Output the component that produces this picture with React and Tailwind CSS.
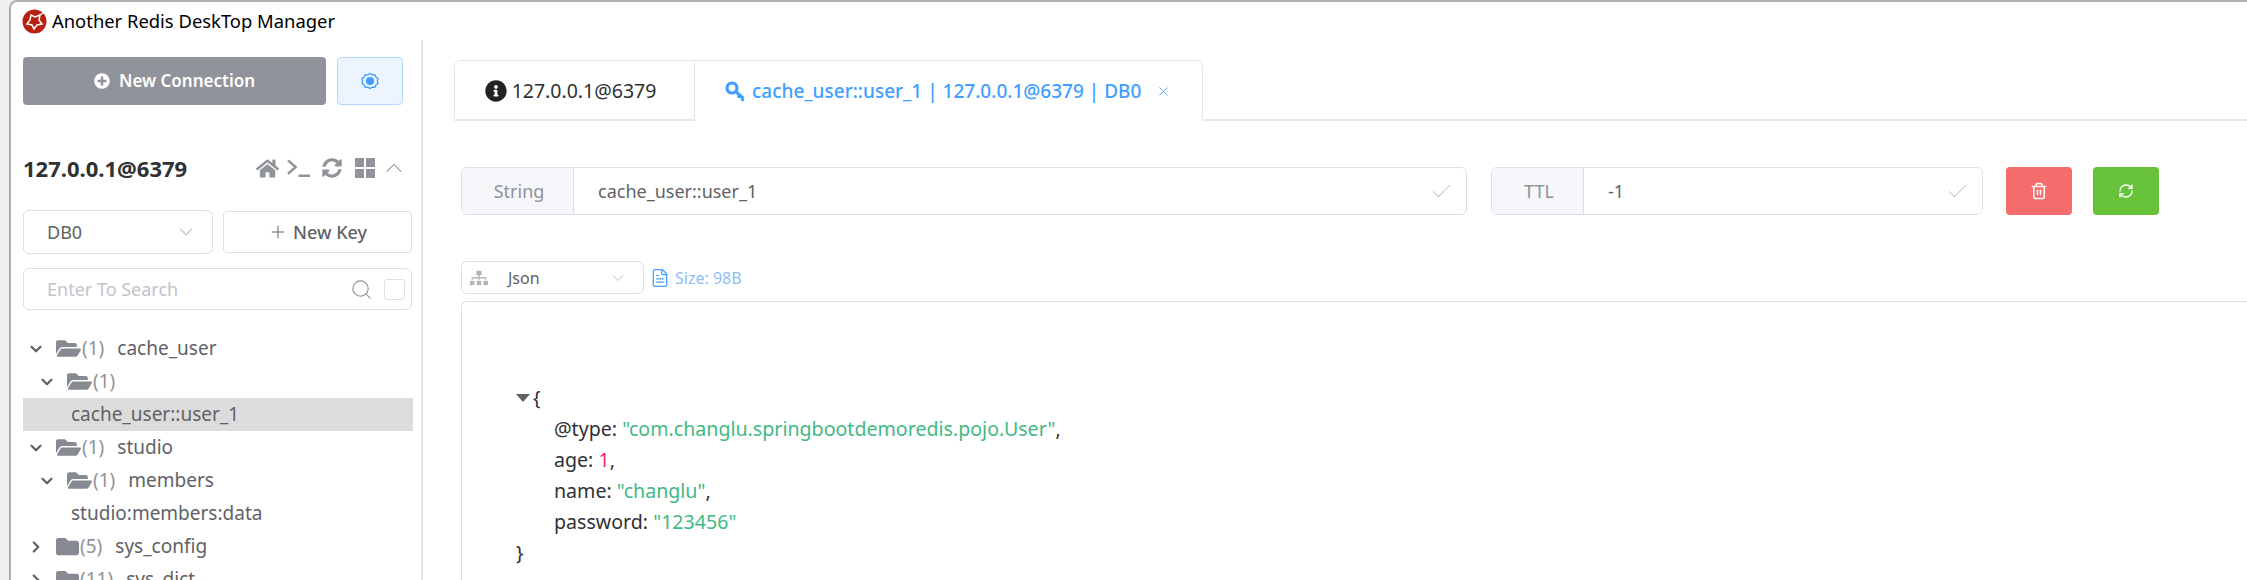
import React from 'react';
import { ChevronDown, ChevronUp, ChevronRight, Plus, Search, Check, Trash2, RefreshCw, X, FileText } from 'lucide-react';
import { FaHome, FaInfoCircle, FaSitemap, FaFolder, FaFolderOpen, FaSyncAlt, FaPlusCircle } from 'react-icons/fa';

const font = 'font-["Noto_Sans","Open_Sans",sans-serif]';

const TreeRow = ({ indent, open, count, name }) => (
  <div className={`flex items-center h-[33px] text-[19px] text-[#606266] ${indent}`}>
    <span className="w-[26px] flex justify-center text-[#606266]">
      {open ? <ChevronDown size={18} strokeWidth={3} /> : <ChevronRight size={18} strokeWidth={3} />}
    </span>
    {open ? <FaFolderOpen size={25} className="ml-[7px] text-[#878a90]" /> : <FaFolder size={23} className="ml-[7px] text-[#878a90]" />}
    <span className="ml-[1px] text-[#909399]">({count})</span>
    {name && <span className="ml-[13px]">{name}</span>}
  </div>
);

const KeyRow = ({ name, active }) => (
  <div className={`flex items-center h-[33px] pl-[48px] text-[19px] text-[#606266] ${active ? 'bg-[#dcdcdc]' : ''}`}>{name}</div>
);

const Field = ({ label, value, labelW, className }) => (
  <div className={`flex h-[48px] border border-[#dcdfe6] rounded-[6px] overflow-hidden ${className}`}>
    <div className={`${labelW} shrink-0 bg-[#f5f7fa] border-r border-[#dcdfe6] flex items-center justify-center pl-[3px] text-[18px] text-[#909399]`}>{label}</div>
    <div className="flex-1 flex items-center pl-[24px] text-[18px] text-[#606266]">{value}</div>
    <div className="w-[37px] flex items-center text-[#c0c4cc]"><Check size={25} strokeWidth={1} /></div>
  </div>
);

export default function App() {
  return (
    <div className={`w-[2247px] h-[580px] overflow-hidden bg-[#f0f0f0] pl-[9px] ${font}`}>
      <div className="h-[580px] bg-white border-l-[2px] border-t-[2px] border-[#b0b0b0] rounded-tl-[8px] overflow-hidden">
        <div className="h-[38px] flex items-center pl-[11px] text-[18.4px] text-black">
          <svg width="25" height="25" viewBox="0 0 25 25" className="mr-[5px]">
            <circle cx="12.5" cy="12.5" r="12" fill="#b8200f" />
            <path d="M9 6l4 2 5-2-1 5 3 4-5 1-3 4-2-4-5-1 3-4z" fill="none" stroke="#fff" strokeWidth="1.5" />
            <path d="M18 6l3-2" stroke="#fff" strokeWidth="1.5" />
          </svg>
          Another Redis DeskTop Manager
        </div>
        <div className="flex">
          <aside className="w-[412px] h-[540px] border-r-2 border-[#e4e7ed] pl-[12px] pt-[17px] shrink-0">
            <div className="w-[389px] flex justify-between">
              <button className="w-[303px] h-[48px] rounded-[4px] bg-[#909399] text-white text-[17px] font-semibold flex items-center justify-center gap-[9px]">
                <FaPlusCircle size={16} />New Connection
              </button>
              <button className="w-[66px] h-[48px] mr-[9px] rounded-[4px] bg-[#ecf5ff] border border-[#b3d8ff] text-[#409eff] flex items-center justify-center">
                <svg width="18" height="18" viewBox="0 0 18 18"><path d="M9 1.500l2.200 1.400 2.600-.2 1.100 2.400 2.100 1.500-.6 2.400.6 2.400-2.100 1.500-1.100 2.400-2.600-.2L9 16.500l-2.200-1.400-2.600.2-1.100-2.400-2.100-1.500.6-2.400-.6-2.400 2.100-1.500 1.100-2.400 2.600.2z" fill="none" stroke="currentColor" strokeWidth="1.300" /><circle cx="9" cy="9" r="4" fill="currentColor" /></svg>
              </button>
            </div>
            <div className="w-[389px] mt-[43px] h-[40px] flex items-center justify-between">
              <span className="text-[22px] font-bold text-[#303133]">127.0.0.1@6379</span>
              <div className="flex items-center text-[#909399]">
                <FaHome size={23} />
                <svg width="24" height="20" viewBox="0 0 25 20" className="ml-[8px]" fill="none" stroke="currentColor" strokeWidth="2.500"><path d="M1 2l8 7-8 7" /><path d="M12 18h12" /></svg>
                <FaSyncAlt size={20} className="ml-[11px]" />
                <svg width="20" height="20" viewBox="0 0 20 20" fill="currentColor" className="ml-[13px]"><rect width="9" height="9" /><rect x="11" width="9" height="9" /><rect y="11" width="9" height="9" /><rect x="11" y="11" width="9" height="9" /></svg>
                <ChevronUp size={28} strokeWidth={1} className="ml-[5px] mr-[4px] text-[#a8abb2]" />
              </div>
            </div>
            <div className="w-[389px] mt-[22px] flex gap-[10px] items-center">
              <div className="w-[190px] h-[44px] rounded-[6px] border border-[#dcdfe6] flex items-center justify-between pl-[23px] pr-[15px] text-[18px] text-[#606266]">
                DB0<ChevronDown size={22} strokeWidth={1.2} className="text-[#c0c4cc]" />
              </div>
              <button className="w-[189px] h-[42px] rounded-[4px] border border-[#dcdfe6] text-[18px] font-medium text-[#606266] flex items-center justify-center gap-[5px]">
                <Plus size={20} strokeWidth={1.2} />New Key
              </button>
            </div>
            <div className="w-[389px] h-[42px] mt-[14px] rounded-[6px] border border-[#dcdfe6] flex items-center pl-[23px] pr-[6px] text-[18px] text-[#c0c4cc]">
              <span className="flex-1">Enter To Search</span>
              <Search size={23} strokeWidth={1.2} className="text-[#909399]" />
              <span className="ml-[11px] w-[21px] h-[21px] rounded-[3px] border border-[#dcdfe6]" />
            </div>
            <div className="w-[390px] mt-[22px]">
              <TreeRow indent="pl-[0px]" open count="1" name="cache_user" />
              <TreeRow indent="pl-[11px]" open count="1" />
              <KeyRow name="cache_user::user_1" active />
              <TreeRow indent="pl-[0px]" open count="1" name="studio" />
              <TreeRow indent="pl-[11px]" open count="1" name="members" />
              <KeyRow name="studio:members:data" />
              <TreeRow indent="pl-[0px]" count="5" name="sys_config" />
              <TreeRow indent="pl-[0px]" count="11" name="sys_dict" />
            </div>
          </aside>
          <main className="flex-1 pt-[20px] pl-[31px]">
            <div className="flex h-[61px] border-b-2 border-[#e4e7ed]">
              <div className="h-[61px] w-[241px] flex items-center justify-center gap-[5px] pr-[8px] border border-[#e4e7ed] rounded-tl-[6px] text-[19.5px] text-[#303133]">
                <FaInfoCircle size={22} className="text-[#222]" />127.0.0.1@6379
              </div>
              <div className="h-[61px] w-[508px] flex items-center pl-[30px] border-t border-r border-[#e4e7ed] rounded-tr-[6px] bg-white text-[19px] font-medium text-[#409eff]">
                <svg width="21" height="21" viewBox="0 0 21 21" fill="none" stroke="currentColor" strokeWidth="3.200" className="mr-[6px]"><circle cx="7" cy="7" r="5" /><path d="M10.500 10.500l8 7M15 14l-2 2.500M18.500 17.500l-2 2" /></svg>
                cache_user::user_1 | 127.0.0.1@6379 | DB0
                <X size={15} strokeWidth={1.3} className="ml-[15px]" />
              </div>
            </div>
            <div className="mt-[46px] pl-[7px] flex items-center">
              <Field label="String" value="cache_user::user_1" labelW="w-[112px]" className="w-[1006px]" />
              <Field label="TTL" value="-1" labelW="w-[92px]" className="w-[492px] ml-[24px]" />
              <button className="ml-[23px] w-[66px] h-[48px] rounded-[4px] bg-[#f56c6c] text-white flex items-center justify-center"><Trash2 size={18} /></button>
              <button className="ml-[21px] w-[66px] h-[48px] rounded-[4px] bg-[#67c23a] text-white flex items-center justify-center"><RefreshCw size={16} /></button>
            </div>
            <div className="mt-[46px] pl-[7px] flex items-center">
              <div className="w-[183px] h-[33px] rounded-[6px] border border-[#dcdfe6] flex items-center justify-between pl-[8px] pr-[15px] text-[16px] text-[#606266]">
                <FaSitemap size={18} className="text-[#b4b6bb]" />
                <span className="mr-[auto] ml-[20px]">Json</span>
                <ChevronDown size={20} strokeWidth={1.2} className="text-[#c0c4cc]" />
              </div>
              <FileText size={20} strokeWidth={1.5} className="ml-[6px] text-[#409eff]" />
              <span className="ml-[5px] text-[16px] text-[#8cc0f7]">Size: 98B</span>
            </div>
            <div className="mt-[7px] ml-[7px] h-[300px] border-t border-l border-[#dcdfe6] rounded-tl-[6px] pt-[80px] pl-[54px] text-[19.6px] leading-[31px] text-[#303133]">
              <div className="flex items-center">
                <span className="w-0 h-0 border-x-[7px] border-x-transparent border-t-[8px] border-t-[#606266] mr-[3px]" />{'{'}
              </div>
              <div className="pl-[38px]">@type: <span className="text-[#42b983]">"com.changlu.springbootdemoredis.pojo.User"</span>,</div>
              <div className="pl-[38px]">age: <span className="text-[#fc1e70]">1</span>,</div>
              <div className="pl-[38px]">name: <span className="text-[#42b983]">"changlu"</span>,</div>
              <div className="pl-[38px]">password: <span className="text-[#42b983]">"123456"</span></div>
              <div>{'}'}</div>
            </div>
          </main>
        </div>
      </div>
    </div>
  );
}
